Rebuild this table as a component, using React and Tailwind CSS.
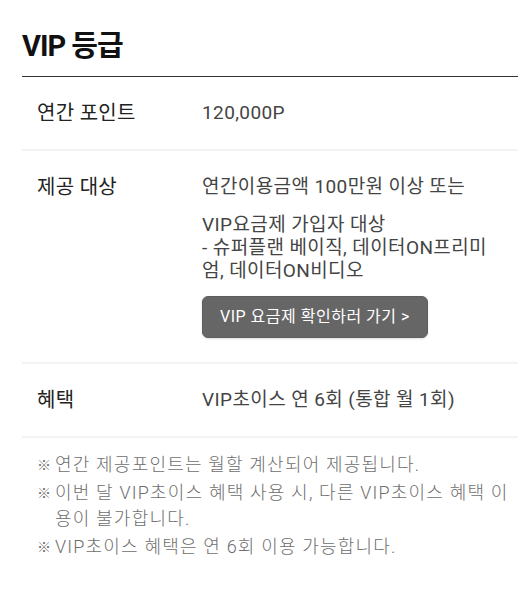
import React from 'react';

const font = { fontFamily: '"Roboto", "Noto Sans CJK KR", sans-serif' };

const rows = [
    { label: '연간 포인트', value: '120,000P' },
    { label: '제공 대상', value: null },
    { label: '혜택', value: 'VIP초이스 연 6회 (통합 월 1회)' },
];

const notes = [
    '연간 제공포인트는 월할 계산되어 제공됩니다.',
    '이번 달 VIP초이스 혜택 사용 시, 다른 VIP초이스 혜택 이용이 불가합니다.',
    'VIP초이스 혜택은 연 6회 이용 가능합니다.',
];

const Target = () => (
    <div className="flex flex-col">
        <p className="leading-[28px]">연간이용금액 100만원 이상 또는</p>
        <p className="mt-[12px] leading-[23px] break-all">
            VIP요금제 가입자 대상<br />
            - 슈퍼플랜 베이직, 데이터ON프리미엄, 데이터ON비디오
        </p>
        <button className="mt-[14px] self-start h-[42px] px-[17px] rounded-[6px] bg-[#666666] border border-[#5e5e5e] text-white text-[16px] tracking-[0.5px] shadow-sm">
            VIP 요금제 확인하러 가기 &gt;
        </button>
    </div>
);

export default function App() {
    return (
        <div className="min-h-screen bg-white pl-[22px] pr-[3px] pt-[26px]" style={font}>
            <h2 className="text-[29px] leading-[40px] font-bold text-[#111] tracking-[-1px] pb-[10px] border-b border-[#333]">
                VIP 등급
            </h2>

            {rows.map((row, i) => (
                <div
                    key={row.label}
                    className={`grid grid-cols-[165px_1fr] pl-[15px] pr-[28px] border-b-2 border-[#f3f3f3] ${i === 1 ? 'pt-[22px] pb-[24px]' : 'pt-[22px] pb-[22px]'}`}
                >
                    <div className="text-[20px] leading-[28px] tracking-[0.3px] text-[#222]">{row.label}</div>
                    <div className="text-[19px] leading-[28px] tracking-[0.4px] text-[#444]">
                        {row.value ?? <Target />}
                    </div>
                </div>
            ))}

            <ul className="pt-[14px] pl-[15px] pr-[8px] flex flex-col gap-[2px] text-[18px] leading-[26px] tracking-[1.2px] font-light text-[#6e6e6e]">
                {notes.map(n => (
                    <li key={n} className="flex">
                        <span className="w-[18px] shrink-0 text-[14px] tracking-normal">※</span>
                        <span className="break-all">{n}</span>
                    </li>
                ))}
            </ul>
        </div>
    );
}
